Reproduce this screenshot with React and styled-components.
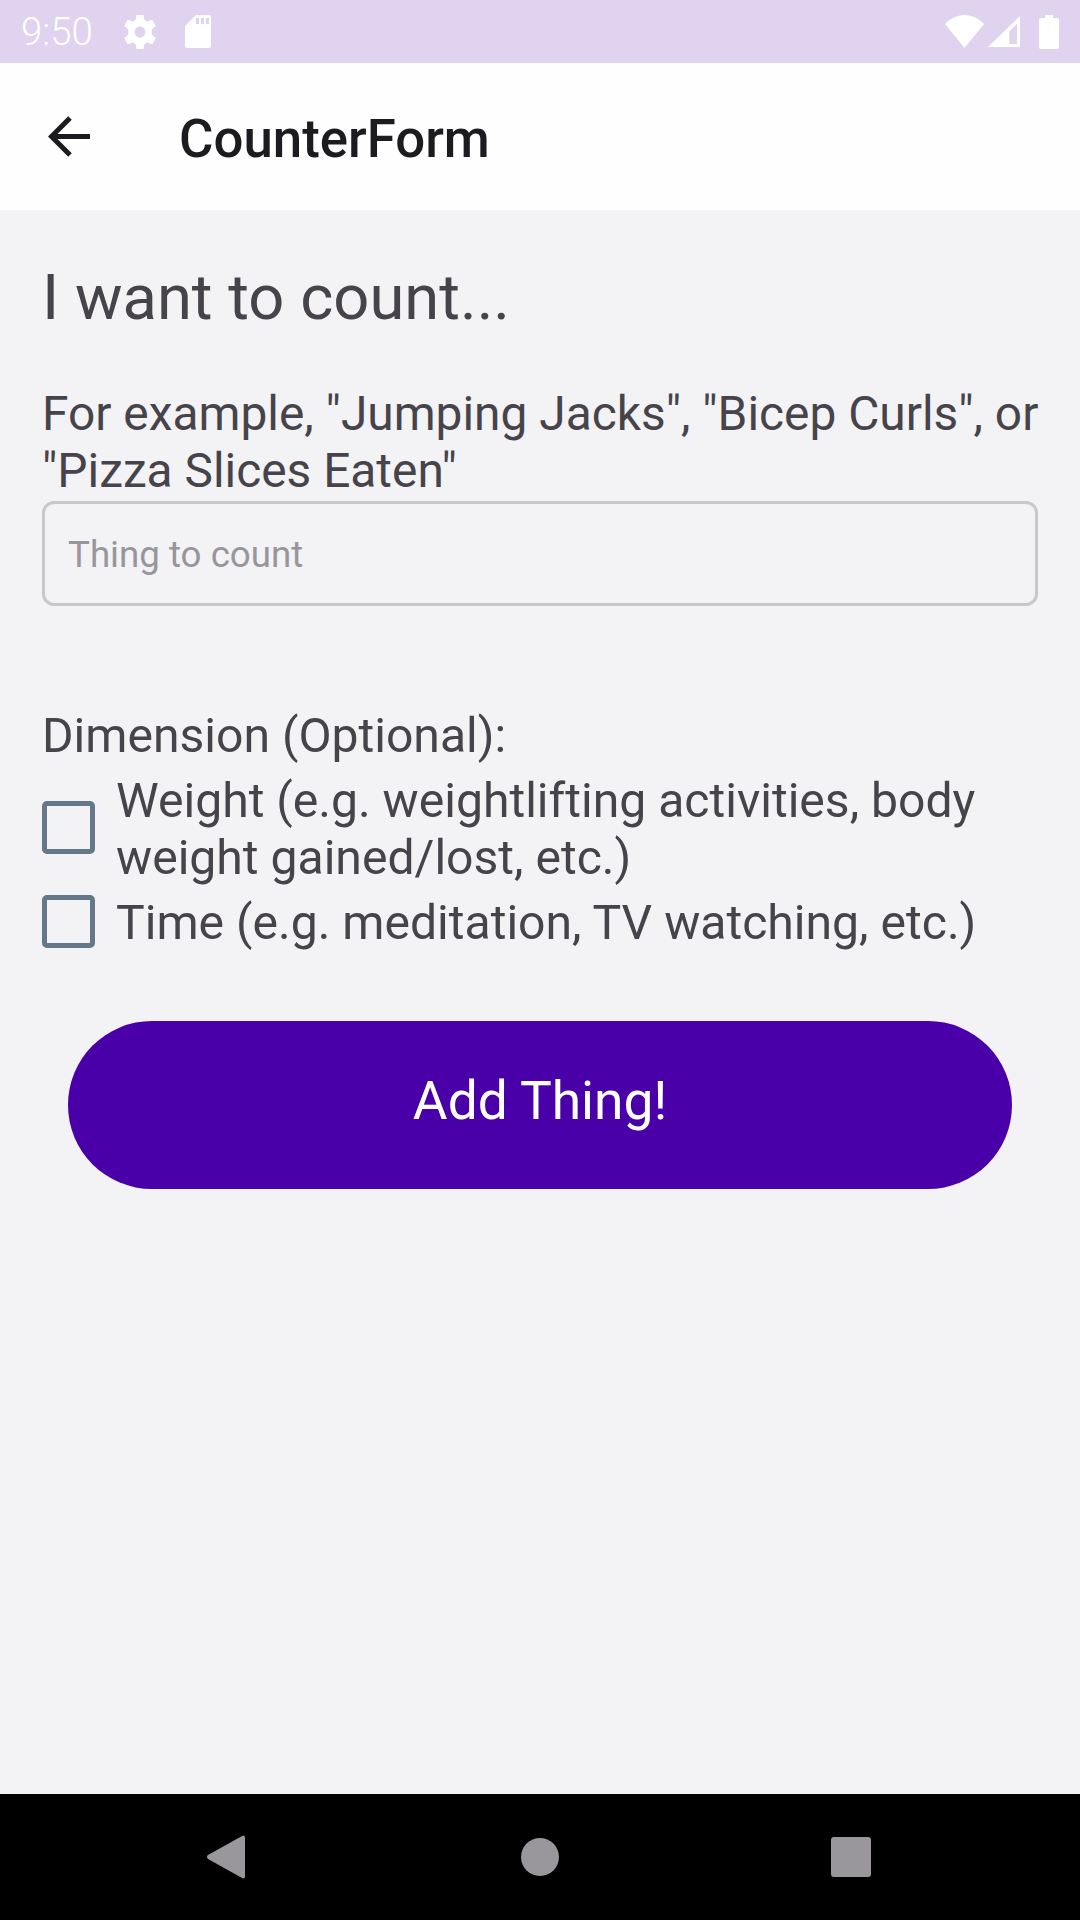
import React from 'react';
import styled, { createGlobalStyle } from 'styled-components';

const Global = createGlobalStyle`
  html, body { margin: 0; padding: 0; background: #f3f2f5; }
  * { box-sizing: border-box; }
`;
const Screen = styled.div`
  width: 1080px; height: 1920px; display: flex; flex-direction: column;
  font-family: Roboto, "Liberation Sans", sans-serif; background: #f3f2f5; color: #46444a; overflow: hidden;
`;
const StatusBar = styled.div`
  height: 63px; background: #dfd3f0; display: flex; align-items: center; padding: 0 21px; color: #fff; flex: none;
`;
const Clock = styled.span`
  font-size: 38.300px; font-weight: 300; line-height: 63px; width: 103px; flex: none;
`;
const StatusIcons = styled.div`
  margin-left: auto; display: flex; align-items: center;
`;
const StatusIcon = styled.svg`
  display: block; fill: #fff; margin-right: ${p => p.$mr || 0}px; flex: none;
`;
const AppBar = styled.header`
  height: 147px; background: #fffeff; display: flex; align-items: center; padding-left: 48px; flex: none;
`;
const BackIcon = styled.svg`
  display: block; flex: none; margin-right: 89px;
`;
const Title = styled.h1`
  margin: 4px 0 0; font-size: 52.800px; font-weight: 500; color: #1c1b1f; line-height: 56px;
`;
const Main = styled.main`
  flex: 1; padding: 51px 42px 0; display: flex; flex-direction: column;
`;
const Heading = styled.h2`
  margin: 0; font-size: 63.300px; font-weight: 400; line-height: 72px; color: #46444a;
`;
const Helper = styled.p`
  margin: 53px -6px 0 0; font-size: 47.850px; line-height: 57px;
`;
const Field = styled.div`
  margin-top: 1px; height: 105px; border: 3px solid #c9c7cc; border-radius: 12px; display: flex; align-items: center;
  padding: 2px 23px 0; font-size: 36.700px; color: #98969c;
`;
const DimensionLabel = styled.div`
  margin-top: 101px; font-size: 48.100px; line-height: 57px;
`;
const CheckRow = styled.label`
  display: flex; align-items: center; gap: 21px; font-size: 48.100px; line-height: 57px;
  margin-top: ${p => p.$mt}px;
`;
const Box = styled.span`
  width: 53px; height: 53px; margin-bottom: 3px; border: 5px solid #64788a; border-radius: 5px; flex: none;
`;
const AddButton = styled.button`
  margin: 70px 26px 0; height: 168px; border: none; border-radius: 84px; background: #4a00a8; color: #fff;
  font-family: inherit; font-size: 53.300px; font-weight: 400; padding: 0 0 8px;
`;
const NavBar = styled.nav`
  height: 126px; background: #000; flex: none; display: flex; align-items: center; justify-content: space-between; padding: 0 209px 0 207px;
`;
const NavIcon = styled.svg`
  display: block; fill: #99979b;
`;
const NavDot = styled.svg`
  display: block; fill: #99979b; margin-left: 4px;
`;

export default function App() {
  return (
    <Screen>
      <Global />
      <StatusBar>
        <Clock>9:50</Clock>
        <StatusIcon width="32" height="34" viewBox="0 0 32 34" $mr={29}>
          <path fillRule="evenodd" d="M12.500 0h7l1 5 3 1.600 4.800-1.800L31.800 11l-4 3.200v5.600l4 3.200-3.500 6.200-4.800-1.800-3 1.600-1 5h-7l-1-5-3-1.600-4.800 1.800L.2 23l4-3.200v-5.600l-4-3.200 3.500-6.200 4.800 1.800 3-1.600zM16 11.500a5.500 5.500 0 1 0 0 11 5.500 5.500 0 0 0 0-11z" />
        </StatusIcon>
        <StatusIcon width="26" height="33" viewBox="0 0 26 33">
          <path fillRule="evenodd" d="M11 0h13a2 2 0 0 1 2 2v29a2 2 0 0 1-2 2H2a2 2 0 0 1-2-2V11zM11 3v6h3V3zm5 0v6h3V3zm5 0v6h3V3z" />
        </StatusIcon>
        <StatusIcons>
          <StatusIcon width="39" height="33" viewBox="0 0 39 33" $mr={4}>
            <path d="M19.500 33L0 9C5 3.500 12 0 19.500 0S34 3.500 39 9z" />
          </StatusIcon>
          <StatusIcon width="32" height="32" viewBox="0 0 33 33" $mr={19}>
            <path fillRule="evenodd" d="M33 0v32H0zM30 8L22 16v13h8z" />
          </StatusIcon>
          <StatusIcon width="20" height="34" viewBox="0 0 20 34">
            <path d="M6 0h8v3h4a2 2 0 0 1 2 2v27a2 2 0 0 1-2 2H2a2 2 0 0 1-2-2V5a2 2 0 0 1 2-2h4z" />
          </StatusIcon>
        </StatusIcons>
      </StatusBar>
      <AppBar>
        <BackIcon width="42" height="41" viewBox="0 0 42 41" fill="none" stroke="#1c1b1f" strokeWidth="5">
          <path d="M42 20.500H4M22 2L3.500 20.500 22 39" />
        </BackIcon>
        <Title>CounterForm</Title>
      </AppBar>
      <Main>
        <Heading>I want to count...</Heading>
        <Helper>For example, "Jumping Jacks", "Bicep Curls", or "Pizza Slices Eaten"</Helper>
        <Field>Thing to count</Field>
        <DimensionLabel>Dimension (Optional):</DimensionLabel>
        <CheckRow $mt={8}><Box />Weight (e.g. weightlifting activities, body weight gained/lost, etc.)</CheckRow>
        <CheckRow $mt={8}><Box />Time (e.g. meditation, TV watching, etc.)</CheckRow>
        <AddButton>Add Thing!</AddButton>
      </Main>
      <NavBar>
        <NavIcon width="38" height="44" viewBox="0 0 38 44"><path d="M36 0.500a2 2 0 0 1 2 2v39a2 2 0 0 1-2 2L1 24a2.500 2.500 0 0 1 0-4z" /></NavIcon>
        <NavDot width="38" height="38" viewBox="0 0 38 38"><circle cx="19" cy="19" r="19" /></NavDot>
        <NavIcon width="40" height="40" viewBox="0 0 40 40"><rect width="40" height="40" rx="3" /></NavIcon>
      </NavBar>
    </Screen>
  );
}
